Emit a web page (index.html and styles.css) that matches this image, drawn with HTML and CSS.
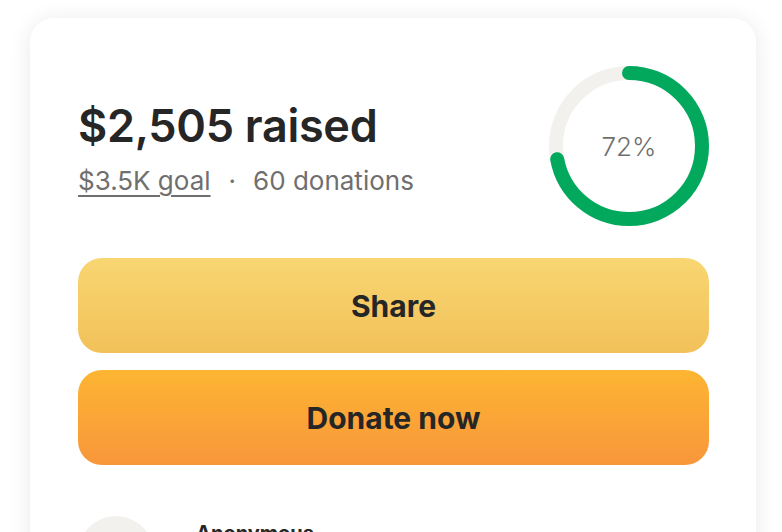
FILE: index.html
```html
<!DOCTYPE html>
<html lang="en">
<head>
<meta charset="utf-8">
<title>Donation progress</title>
<link rel="stylesheet" href="styles.css">
</head>
<body>
<div class="page">
  <section class="card">
    <div class="summary">
      <div class="amounts">
        <h1 class="raised">$2,505 raised</h1>
        <p class="meta"><a class="goal" href="#">$3.5K goal</a><span class="dot">·</span><span>60 donations</span></p>
      </div>
      <div class="ring">
        <svg width="160" height="160" viewBox="0 0 160 160">
          <circle cx="80" cy="80" r="73" fill="none" stroke="#f2f1ed" stroke-width="14"/>
          <circle cx="80" cy="80" r="73" fill="none" stroke="#02a95c" stroke-width="14" stroke-linecap="round" stroke-dasharray="330.2 458.7" transform="rotate(-90 80 80)"/>
        </svg>
        <span class="pct">72%</span>
      </div>
    </div>
    <div class="actions">
      <button class="btn btn-share">Share</button>
      <button class="btn btn-donate">Donate now</button>
    </div>
    <div class="donor">
      <div class="avatar">
        <svg width="32" height="32" viewBox="0 0 32 32" fill="none" stroke="#262626" stroke-width="2.4" stroke-linecap="round" stroke-linejoin="round">
          <path d="M16 2v6"/>
          <path d="M16 28s-10-6-10-13a5 5 0 0 1 10-2 5 5 0 0 1 10 2c0 7-10 13-10 13z"/>
        </svg>
      </div>
      <div class="donor-name">Anonymous</div>
    </div>
  </section>
</div>
</body>
</html>
```

FILE: styles.css
```css
* { box-sizing: border-box; }
html, body { margin: 0; padding: 0; background: #ffffff; }
body {
  font-family: Inter, "Noto Sans", "Liberation Sans", sans-serif;
  color: #262626;
  overflow: hidden;
  height: 532px;
}
.page {
  padding: 18px 26px 0 30px;
}
.card {
  background: #ffffff;
  border-radius: 24px;
  box-shadow: 0 2px 22px rgba(0, 0, 0, 0.09);
  padding: 48px 47px 40px 48px;
  width: 726px;
}
.summary {
  display: flex;
  align-items: center;
  justify-content: space-between;
}
.amounts { padding-top: 5px; }
.raised {
  margin: 0;
  font-size: 45px;
  font-weight: 600;
  letter-spacing: -0.3px;
  line-height: 48px;
  color: #262626;
}
.meta {
  margin: 16px 0 0;
  font-size: 26px;
  line-height: 30px;
  color: #6f6f6f;
  display: flex;
  align-items: center;
}
.goal {
  color: #6f6f6f;
  text-decoration: underline;
  text-underline-offset: 5px;
  text-decoration-thickness: 1.5px;
}
.dot { margin: 0 17px 0 18px; }
.ring {
  position: relative;
  width: 160px;
  height: 160px;
  flex: none;
}
.ring svg { display: block; }
.pct {
  position: absolute;
  inset: 0;
  display: flex;
  align-items: center;
  justify-content: center;
  font-size: 26px;
  color: #6f6f6f;
  font-weight: 300;
}
.actions {
  margin-top: 32px;
  display: flex;
  flex-direction: column;
  gap: 17px;
}
.btn {
  border: none;
  border-radius: 24px;
  height: 95px;
  width: 100%;
  font-family: inherit;
  font-size: 30px;
  font-weight: 700;
  color: #262626;
  cursor: pointer;
}
.btn-share {
  background: linear-gradient(180deg, #f8d672 0%, #f2c159 100%);
}
.btn-donate {
  background: linear-gradient(180deg, #fdb532 0%, #f8963b 100%);
}
.donor {
  margin-top: 51px;
  display: flex;
  align-items: flex-start;
  gap: 42px;
}
.avatar {
  width: 76px;
  height: 76px;
  border-radius: 50%;
  background: #f2f1ed;
  display: flex;
  align-items: center;
  justify-content: center;
  flex: none;
}
.donor-name {
  padding-top: 5px;
  font-size: 20px;
  font-weight: 700;
  color: #262626;
}
```
